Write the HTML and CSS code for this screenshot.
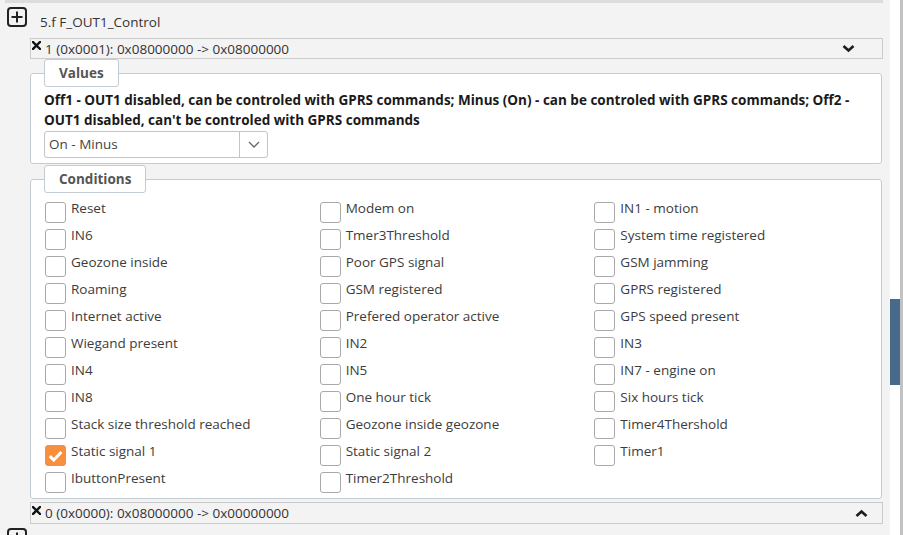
FILE: index.html
```html
<!DOCTYPE html>
<html>
<head>
<meta charset="utf-8">
<link rel="stylesheet" href="styles.css">
</head>
<body>
<div class="window">
  <div class="main">
    <div class="topbar"></div>
    <div class="node">
      <div class="node-title">
        <svg class="plus" width="20" height="20" viewBox="0 0 20 20"><rect x="1" y="1" width="18" height="18" rx="3" fill="none" stroke="#222" stroke-width="2"/><path d="M10 4.5v11M4.5 10h11" stroke="#222" stroke-width="2"/></svg>
        <span class="node-name">5.f F_OUT1_Control</span>
      </div>
      <div class="item">
        <div class="item-head open">
          <svg class="xicon" width="9" height="9" viewBox="0 0 9 9"><path d="M1 1L8 8M8 1L1 8" stroke="#111" stroke-width="2.4" stroke-linecap="square"/></svg>
          <span class="item-name">1 (0x0001): 0x08000000 -&gt; 0x08000000</span>
          <svg class="chev" width="13" height="9" viewBox="0 0 13 9"><path d="M1.5 2l5 4.5 5-4.5" fill="none" stroke="#1e1e1e" stroke-width="2.6"/></svg>
        </div>
        <fieldset class="group">
          <legend>Values</legend>
          <p class="desc">Off1 - OUT1 disabled, can be controled with GPRS commands; Minus (On) - can be controled with GPRS commands; Off2 - OUT1 disabled, can't be controled with GPRS commands</p>
          <div class="select">
            <span class="select-val">On - Minus</span>
            <span class="select-btn"><svg width="12" height="7" viewBox="0 0 12 7"><path d="M1 1l5 5 5-5" fill="none" stroke="#666" stroke-width="1.3"/></svg></span>
          </div>
        </fieldset>
        <fieldset class="group conditions">
          <legend>Conditions</legend>
          <div class="grid">
            <label class="cond"><span class="box"></span><span>Reset</span></label>
            <label class="cond"><span class="box"></span><span>Modem on</span></label>
            <label class="cond"><span class="box"></span><span>IN1 - motion</span></label>
            <label class="cond"><span class="box"></span><span>IN6</span></label>
            <label class="cond"><span class="box"></span><span>Tmer3Threshold</span></label>
            <label class="cond"><span class="box"></span><span>System time registered</span></label>
            <label class="cond"><span class="box"></span><span>Geozone inside</span></label>
            <label class="cond"><span class="box"></span><span>Poor GPS signal</span></label>
            <label class="cond"><span class="box"></span><span>GSM jamming</span></label>
            <label class="cond"><span class="box"></span><span>Roaming</span></label>
            <label class="cond"><span class="box"></span><span>GSM registered</span></label>
            <label class="cond"><span class="box"></span><span>GPRS registered</span></label>
            <label class="cond"><span class="box"></span><span>Internet active</span></label>
            <label class="cond"><span class="box"></span><span>Prefered operator active</span></label>
            <label class="cond"><span class="box"></span><span>GPS speed present</span></label>
            <label class="cond"><span class="box"></span><span>Wiegand present</span></label>
            <label class="cond"><span class="box"></span><span>IN2</span></label>
            <label class="cond"><span class="box"></span><span>IN3</span></label>
            <label class="cond"><span class="box"></span><span>IN4</span></label>
            <label class="cond"><span class="box"></span><span>IN5</span></label>
            <label class="cond"><span class="box"></span><span>IN7 - engine on</span></label>
            <label class="cond"><span class="box"></span><span>IN8</span></label>
            <label class="cond"><span class="box"></span><span>One hour tick</span></label>
            <label class="cond"><span class="box"></span><span>Six hours tick</span></label>
            <label class="cond"><span class="box"></span><span>Stack size threshold reached</span></label>
            <label class="cond"><span class="box"></span><span>Geozone inside geozone</span></label>
            <label class="cond"><span class="box"></span><span>Timer4Thershold</span></label>
            <label class="cond"><span class="box checked"><svg width="15" height="12" viewBox="0 0 15 12"><path d="M1.8 6.2l4 3.8 7.6-8" fill="none" stroke="#fff" stroke-width="3"/></svg></span><span>Static signal 1</span></label>
            <label class="cond"><span class="box"></span><span>Static signal 2</span></label>
            <label class="cond"><span class="box"></span><span>Timer1</span></label>
            <label class="cond"><span class="box"></span><span>IbuttonPresent</span></label>
            <label class="cond"><span class="box"></span><span>Timer2Threshold</span></label>
          </div>
        </fieldset>
      </div>
      <div class="item">
        <div class="item-head closed">
          <svg class="xicon" width="9" height="9" viewBox="0 0 9 9"><path d="M1 1L8 8M8 1L1 8" stroke="#111" stroke-width="2.4" stroke-linecap="square"/></svg>
          <span class="item-name">0 (0x0000): 0x08000000 -&gt; 0x00000000</span>
          <svg class="chev" width="13" height="9" viewBox="0 0 13 9"><path d="M1.5 7l5-4.5 5 4.5" fill="none" stroke="#1e1e1e" stroke-width="2.6"/></svg>
        </div>
      </div>
    </div>
    <div class="node">
      <div class="node-title">
        <svg class="plus" width="20" height="20" viewBox="0 0 20 20"><rect x="1" y="1" width="18" height="18" rx="3" fill="none" stroke="#222" stroke-width="2"/><path d="M10 4.5v11M4.5 10h11" stroke="#222" stroke-width="2"/></svg>
      </div>
    </div>
  </div>
  <div class="scrollbar"><div class="thumb"></div></div>
</div>
</body>
</html>
```

FILE: styles.css
```css
html, body {
  margin: 0;
  padding: 0;
  height: 100%;
  overflow: hidden;
}
body {
  background: #f3f3f3;
  font-family: "Open Sans", "Liberation Sans", sans-serif;
  font-size: 13.5px;
  color: #3a3a3a;
}
.window {
  display: flex;
  height: 535px;
}
.main {
  width: 890px;
  flex: none;
}
.topbar {
  margin-left: 5px;
  width: 878px;
  height: 3px;
  background: #dcdcdc;
}
.node-title {
  display: flex;
  align-items: flex-start;
  padding: 4px 0 0 7px;
  height: 35px;
  box-sizing: border-box;
}
.plus {
  display: block;
  flex: none;
}
.node-name {
  margin-left: 13px;
  margin-top: 5px;
  line-height: 20px;
  color: #333;
}
.node .item {
  margin-left: 30px;
  width: 853px;
}
.item-head {
  display: flex;
  align-items: center;
  border: 1px solid #cbcbcb;
  box-sizing: border-box;
  background: #f3f3f3;
  padding-left: 1px;
}
.item-head.open {
  height: 21px;
  padding-right: 27px;
}
.item-head.closed {
  margin-top: 3px;
  height: 22px;
  padding-right: 14px;
}
.xicon {
  flex: none;
  margin-top: -6px;
}
.item-name {
  margin-left: 4px;
  flex: 1;
  color: #333;
  line-height: 18px;
}
.chev {
  flex: none;
}
.group {
  margin: 0;
  padding: 0 13px 5px;
  border: 1px solid #c3cbd3;
  border-radius: 3px;
  background: #fff;
  min-width: 0;
  width: 852px;
  box-sizing: border-box;
}
.group legend {
  padding: 0 14px;
  height: 28px;
  line-height: 26px;
  box-sizing: border-box;
  border: 1px solid #c3cbd3;
  border-radius: 3px;
  background: #fff;
  font-weight: bold;
  font-size: 13.5px;
  color: #555;
}
.conditions {
  margin-top: 1px;
  padding-bottom: 1px;
}
.desc {
  margin: 3px 0 1px;
  font-weight: bold;
  font-size: 13.5px;
  line-height: 20px;
  color: #1a1a1a;
}
.select {
  display: flex;
  width: 224px;
  height: 27px;
  border: 1px solid #c4c4c4;
  border-radius: 3px;
  box-sizing: border-box;
  background: #fff;
}
.select-val {
  flex: 1;
  padding-left: 4px;
  line-height: 25px;
  color: #444;
}
.select-btn {
  width: 27px;
  border-left: 1px solid #c4c4c4;
  display: flex;
  align-items: center;
  justify-content: center;
}
.select-btn svg {
  display: block;
}
.grid {
  display: grid;
  grid-template-columns: 1fr 1fr 1fr;
  grid-auto-rows: 27px;
  margin-top: 7px;
}
.cond {
  display: flex;
  align-items: flex-start;
  padding-left: 1px;
}
.box {
  flex: none;
  width: 21px;
  height: 21px;
  margin-top: 2px;
  border: 1px solid #a9a9a9;
  border-radius: 3px;
  box-sizing: border-box;
  background: #fff;
  display: flex;
  align-items: center;
  justify-content: center;
}
.box.checked {
  background: #f98f3c;
  border-color: #f98f3c;
}
.box svg {
  display: block;
}
.cond span:last-child {
  margin-left: 5px;
  line-height: 17px;
  color: #3c3c3c;
}
.scrollbar {
  flex: none;
  width: 10px;
  background: #fff;
  border-right: 3px solid #c2c2c2;
}
.thumb {
  margin-top: 299px;
  height: 86px;
  background: #486a8a;
}
```
